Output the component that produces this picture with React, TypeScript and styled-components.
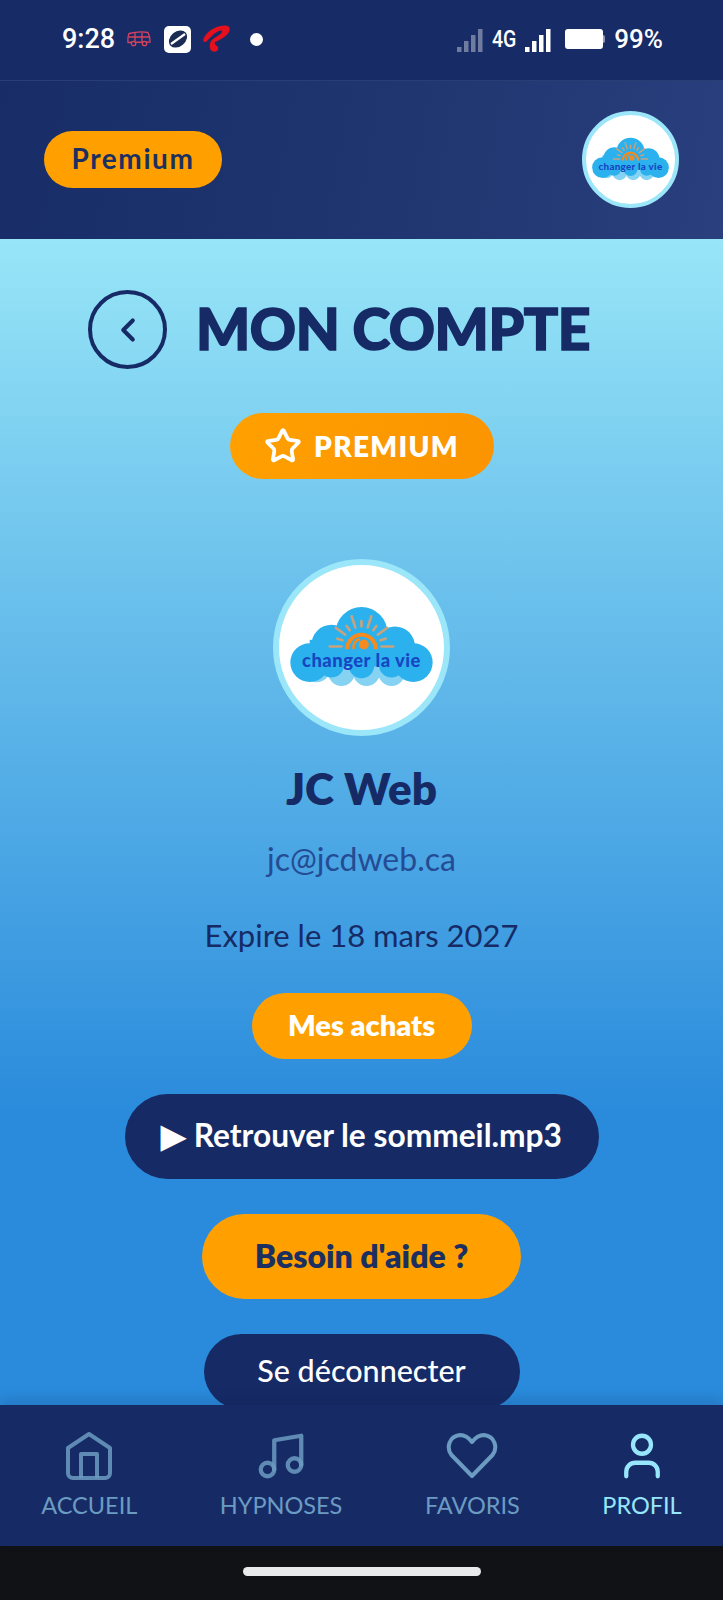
import styled, { createGlobalStyle } from 'styled-components';
import { ChevronLeft, Music, Star, User } from 'lucide-react';

const GlobalStyle = createGlobalStyle`
  html, body {
    margin: 0;
    padding: 0;
    background: #111216;
  }
  * {
    box-sizing: border-box;
  }
`;

const Page = styled.div`
  width: 723px;
  height: 1600px;
  display: flex;
  flex-direction: column;
  overflow: hidden;
  font-family: Lato, 'Noto Sans', sans-serif;
`;

const StatusBar = styled.div`
  height: 81px;
  flex: none;
  display: flex;
  align-items: center;
  justify-content: space-between;
  padding: 0 60px 2px 62px;
  background: #172b66;
  border-bottom: 1px solid #2a3d75;
  color: #fff;
  font-family: Roboto, sans-serif;
  font-weight: 500;
`;

const StatusGroup = styled.div`
  display: flex;
  align-items: center;
`;

const Clock = styled.span`
  font-size: 27px;
  margin-right: 12px;
`;

const Network = styled.span`
  font-size: 23px;
  width: 24px;
  margin: 0 9px;
  transform: scaleX(0.85);
  transform-origin: left center;
  white-space: nowrap;
`;

const BatteryBody = styled.span`
  display: block;
  width: 38px;
  height: 20px;
  border-radius: 3px;
  background: #fff;
  margin-left: 14px;
  position: relative;
  &::after {
    content: '';
    position: absolute;
    right: -2px;
    top: 6px;
    width: 2px;
    height: 8px;
    border-radius: 0 2px 2px 0;
    background: #8f9ab8;
  }
`;

const Percent = styled.span`
  font-size: 26px;
  margin-left: 11px;
`;

const AppIconBox = styled.span`
  width: 27px;
  height: 27px;
  margin: 0 12px 0 13px;
  border-radius: 5px;
  background: #fff;
  display: flex;
  align-items: center;
  justify-content: center;
`;

const NotifDot = styled.span`
  width: 13px;
  height: 13px;
  border-radius: 50%;
  background: #fff;
  margin-left: 19px;
`;

const Header = styled.header`
  height: 158px;
  flex: none;
  display: flex;
  align-items: center;
  justify-content: space-between;
  padding: 0 44px 2px;
  background: linear-gradient(100deg, #182d68 0%, #1f3670 55%, #2a3f7e 100%);
`;

const PlanPill = styled.span`
  width: 178px;
  height: 57px;
  padding-bottom: 3px;
  border-radius: 29px;
  background: #ffa000;
  color: #1c2f61;
  display: flex;
  align-items: center;
  justify-content: center;
  font-size: 28px;
  font-weight: 700;
  letter-spacing: 1.6px;
`;

const Avatar = styled.div<{ $size: number; $ring: number }>`
  width: ${(p) => p.$size}px;
  height: ${(p) => p.$size}px;
  flex: none;
  border-radius: 50%;
  background: #fff;
  border: ${(p) => p.$ring}px solid #9be6f8;
  overflow: hidden;
  display: flex;
  align-items: center;
  justify-content: center;
`;

const Main = styled.main`
  flex: 1;
  min-height: 0;
  overflow: hidden;
  display: flex;
  flex-direction: column;
  align-items: center;
  padding-top: 51px;
  background: linear-gradient(180deg, #97e5f7 0%, #2a8bdc 75%, #2a8bdc 100%);
`;

const TitleRow = styled.div`
  align-self: stretch;
  flex: none;
  display: flex;
  align-items: center;
  gap: 29px;
  padding-left: 88px;
`;

const BackButton = styled.button`
  width: 79px;
  height: 79px;
  padding: 0;
  border-radius: 50%;
  border: 4px solid #162b66;
  background: transparent;
  color: #162b66;
  display: flex;
  align-items: center;
  justify-content: center;
`;

const Title = styled.h1`
  margin: 0;
  padding-bottom: 3px;
  font-size: 57px;
  font-weight: 900;
  line-height: 73px;
  letter-spacing: -0.4px;
  color: #162b66;
  -webkit-text-stroke: 1.6px #162b66;
  white-space: nowrap;
`;

const PremiumBadge = styled.div`
  width: 264px;
  height: 66px;
  flex: none;
  margin-top: 44px;
  border-radius: 33px;
  background: linear-gradient(100deg, #ffa000, #fb9400);
  color: #fff;
  display: flex;
  align-items: center;
  justify-content: center;
  gap: 12px;
  font-size: 28px;
  font-weight: 800;
  letter-spacing: 1.3px;
`;

const Profile = styled.section`
  margin-top: 80px;
  flex: none;
  display: flex;
  flex-direction: column;
  align-items: center;
`;

const Name = styled.div`
  margin-top: 24px;
  font-size: 44px;
  line-height: 56px;
  font-weight: 800;
  color: #162b66;
`;

const Email = styled.div`
  margin-top: 22px;
  font-size: 32px;
  line-height: 42px;
  color: #244c94;
`;

const Expiry = styled.div`
  margin-top: 35px;
  font-size: 31px;
  line-height: 40px;
  color: #162b66;
`;

const Action = styled.button<{ $width: number; $height: number; $bg: string; $fg: string; $size: number; $weight: number }>`
  width: ${(p) => p.$width}px;
  height: ${(p) => p.$height}px;
  flex: none;
  padding: 0 0 3px;
  border: 0;
  border-radius: ${(p) => p.$height / 2}px;
  background: ${(p) => p.$bg};
  color: ${(p) => p.$fg};
  font-family: inherit;
  font-size: ${(p) => p.$size}px;
  font-weight: ${(p) => p.$weight};
  white-space: nowrap;
`;

const Actions = styled.div`
  margin-top: 38px;
  flex: none;
  display: flex;
  flex-direction: column;
  align-items: center;
  gap: 35px;
`;

const Nav = styled.nav`
  height: 141px;
  flex: none;
  display: flex;
  justify-content: space-around;
  padding-top: 24px;
  background: #162b66;
  box-shadow: 0 -6px 12px rgba(10, 20, 60, 0.16);
  position: relative;
`;

const NavItem = styled.div<{ $active?: boolean }>`
  display: flex;
  flex-direction: column;
  align-items: center;
  color: ${(p) => (p.$active ? '#97e6fb' : '#6c9bc2')};
`;

const NavLabel = styled.span`
  margin-top: 4px;
  font-size: 23.5px;
  line-height: 36px;
`;

const GestureBar = styled.div`
  height: 54px;
  flex: none;
  background: #111216;
  display: flex;
  align-items: center;
  justify-content: center;
  padding-bottom: 4px;
`;

const GestureHandle = styled.span`
  width: 238px;
  height: 9px;
  border-radius: 5px;
  background: #e9eaec;
`;

const SignalSvg = styled.svg`
  margin-top: 3px;
`;

function SignalBars({ dim }: { dim?: boolean }) {
  return (
    <SignalSvg width="26" height="24" viewBox="0 0 26 24" fill="#fff" opacity={dim ? 0.38 : 1}>
      <rect x="0" y="18" width="4.5" height="5" />
      <rect x="7" y="12" width="4.5" height="11" />
      <rect x="14" y="6" width="4.5" height="17" />
      <rect x="21" y="0" width="4.5" height="23" />
    </SignalSvg>
  );
}

function BusIcon() {
  return (
    <svg width="24" height="16" viewBox="0 0 24 16" fill="none" stroke="#d8435f" strokeWidth="1.3">
      <path d="M2 2.5 Q12 0 21 1.5 Q23 5 23 11 L1 11.5 Q0.5 6 2 2.5Z" />
      <path d="M1.5 6 H22.5 M8 2 V11 M15 1.5 V11" />
      <circle cx="6.5" cy="12.5" r="2.2" fill="#172b66" />
      <circle cx="17.5" cy="12.5" r="2.2" fill="#172b66" />
    </svg>
  );
}

function OrbitIcon() {
  return (
    <svg width="22" height="22" viewBox="0 0 22 22">
      <ellipse cx="11" cy="11" rx="10" ry="7.5" fill="#1a2c52" transform="rotate(-40 11 11)" />
      <path d="M4 16 L18 6" stroke="#fff" strokeWidth="2.2" />
    </svg>
  );
}

function AirtelIcon() {
  return (
    <svg width="28" height="28" viewBox="0 0 28 28">
      <path
        d="M0.5 14 C3 7 12 1 21 0.5 C26 0 28 3 26 7 C24 11 17 15 12 17 C11 19 13 20 15 22 C16 25 13 27.5 10 26.5 C6 25 6 20 8 16 C11 12 17 11 19 7 C20 5 17 5 14 7 C10 9 7 13 4 16 C2 18 -0.5 17 0.5 14Z"
        fill="#e60f1e"
      />
    </svg>
  );
}

function HomeIcon() {
  return (
    <svg width="54" height="54" viewBox="0 0 54 54" fill="none" stroke="currentColor" strokeWidth="4" strokeLinejoin="round" strokeOpacity="0.85">
      <path d="M27 5 L48 19 V44 a5 5 0 0 1 -5 5 H11 a5 5 0 0 1 -5 -5 V19 Z" />
      <path d="M19 49 V25 H35 V49" />
    </svg>
  );
}

function HeartIcon() {
  return (
    <svg width="54" height="54" viewBox="0 0 54 54" fill="none" stroke="currentColor" strokeWidth="4" strokeLinejoin="round">
      <path d="M27 47 L6.5 26 C1 19 4 7 15 6 C20 6 24 9 27 13 C30 9 34 6 39 6 C50 7 53 19 47.5 26 Z" />
    </svg>
  );
}

function CloudLogo({ size }: { size: number }) {
  const rays = Array.from({ length: 11 }, (_, i) => {
    const angle = (Math.PI * i) / 10;
    const outer = i % 2 === 0 ? 95 : 76;
    const inner = 60;
    return {
      x1: 305 + Math.cos(angle) * inner,
      y1: 290 - Math.sin(angle) * inner,
      x2: 305 + Math.cos(angle) * outer,
      y2: 290 - Math.sin(angle) * outer,
    };
  });
  return (
    <svg width={size} height={size} viewBox="58 46 494 494">
      <g fill="#85d2f2">
        <circle cx="170" cy="355" r="42" />
        <circle cx="245" cy="368" r="40" />
        <circle cx="320" cy="368" r="40" />
        <circle cx="395" cy="368" r="40" />
        <circle cx="465" cy="350" r="42" />
      </g>
      <g fill="#2bb1ee">
        <circle cx="150" cy="338" r="58" />
        <circle cx="460" cy="338" r="58" />
        <circle cx="215" cy="285" r="60" />
        <circle cx="305" cy="250" r="78" />
        <circle cx="405" cy="290" r="60" />
        <circle cx="215" cy="345" r="38" />
        <circle cx="305" cy="347" r="38" />
        <circle cx="395" cy="345" r="38" />
        <rect x="150" y="270" width="310" height="80" />
      </g>
      <g stroke="#c8a27d" strokeWidth="8" strokeLinecap="round">
        {rays.map((ray) => (
          <line key={ray.x2} {...ray} />
        ))}
      </g>
      <path d="M262 298 A43 43 0 0 1 348 298" fill="none" stroke="#f58a1f" strokeWidth="12" />
      <path d="M282 298 A24 24 0 0 1 300 268" fill="none" stroke="#f58a1f" strokeWidth="8" />
      <circle cx="312" cy="284" r="15" fill="#f58a1f" />
      <text
        x="305"
        y="352"
        textAnchor="middle"
        fontFamily="Lato, sans-serif"
        fontWeight="900"
        fontSize="55"
        letterSpacing="1.5"
        fill="#1746c2"
      >
        changer la vie
      </text>
    </svg>
  );
}

const navItems = [
  { label: 'ACCUEIL', icon: <HomeIcon /> },
  { label: 'HYPNOSES', icon: <Music size={54} strokeWidth={1.9} strokeOpacity={0.85} /> },
  { label: 'FAVORIS', icon: <HeartIcon /> },
  { label: 'PROFIL', icon: <User size={54} strokeWidth={1.9} />, active: true },
];

export default function App() {
  return (
    <Page>
      <GlobalStyle />
      <StatusBar>
        <StatusGroup>
          <Clock>9:28</Clock>
          <BusIcon />
          <AppIconBox>
            <OrbitIcon />
          </AppIconBox>
          <AirtelIcon />
          <NotifDot />
        </StatusGroup>
        <StatusGroup>
          <SignalBars dim />
          <Network>4G</Network>
          <SignalBars />
          <BatteryBody />
          <Percent>99%</Percent>
        </StatusGroup>
      </StatusBar>

      <Header>
        <PlanPill>Premium</PlanPill>
        <Avatar $size={97} $ring={4}>
          <CloudLogo size={89} />
        </Avatar>
      </Header>

      <Main>
        <TitleRow>
          <BackButton aria-label="Retour">
            <ChevronLeft size={38} strokeWidth={2.6} />
          </BackButton>
          <Title>MON COMPTE</Title>
        </TitleRow>

        <PremiumBadge>
          <Star size={38} strokeWidth={2.4} />
          PREMIUM
        </PremiumBadge>

        <Profile>
          <Avatar $size={177} $ring={6}>
            <CloudLogo size={165} />
          </Avatar>
          <Name>JC Web</Name>
          <Email>jc@jcdweb.ca</Email>
          <Expiry>Expire le 18 mars 2027</Expiry>
        </Profile>

        <Actions>
          <Action $width={220} $height={66} $bg="#ffa000" $fg="#fff" $size={29} $weight={800}>
            Mes achats
          </Action>
          <Action $width={474} $height={85} $bg="#162b66" $fg="#fff" $size={31.7} $weight={700}>
            ▶ Retrouver le sommeil.mp3
          </Action>
          <Action $width={319} $height={85} $bg="#ffa000" $fg="#1c2f61" $size={32} $weight={800}>
            Besoin d'aide ?
          </Action>
          <Action $width={316} $height={75} $bg="#162b66" $fg="#fff" $size={30.5} $weight={500}>
            Se déconnecter
          </Action>
        </Actions>
      </Main>

      <Nav>
        {navItems.map(({ label, icon, active }) => (
          <NavItem key={label} $active={active}>
            {icon}
            <NavLabel>{label}</NavLabel>
          </NavItem>
        ))}
      </Nav>

      <GestureBar>
        <GestureHandle />
      </GestureBar>
    </Page>
  );
}
